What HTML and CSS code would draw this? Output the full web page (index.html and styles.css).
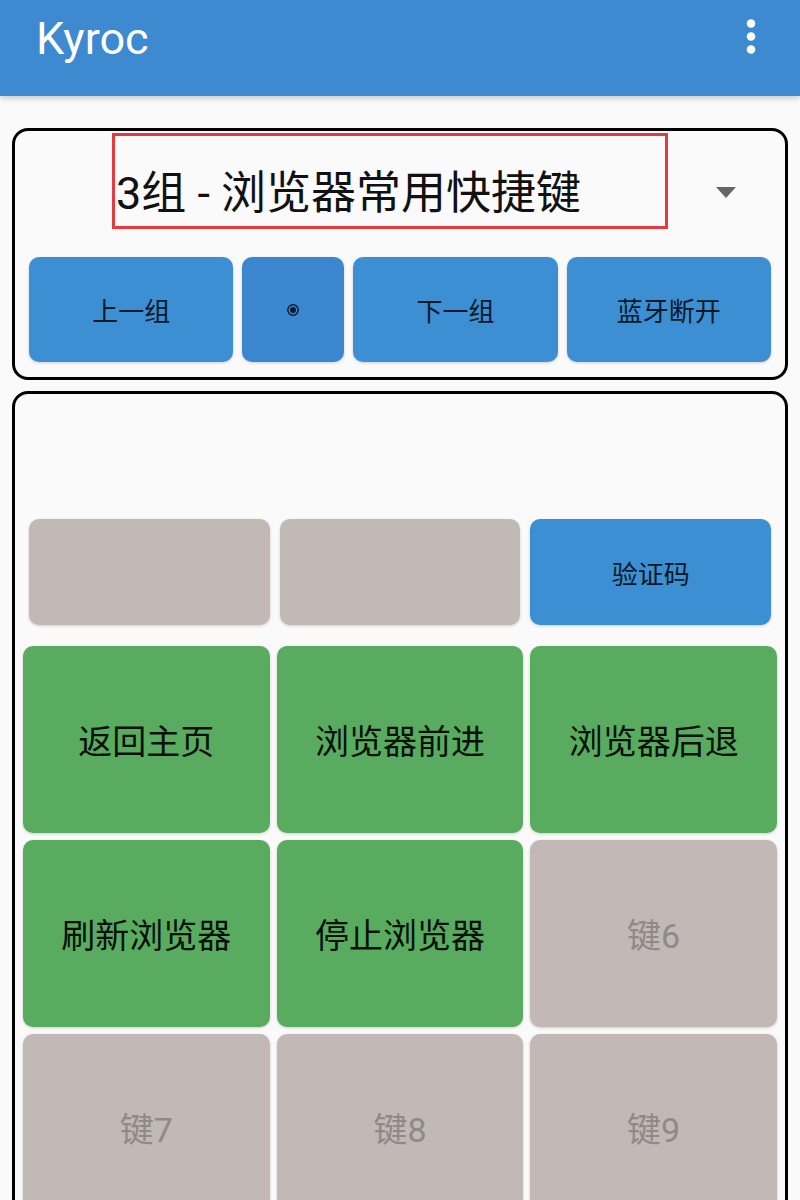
FILE: index.html
```html
<!DOCTYPE html>
<html lang="zh">
<head>
<meta charset="utf-8">
<title>Kyroc</title>
<link rel="stylesheet" href="styles.css">
</head>
<body>
<header class="appbar">
  <div class="title">Kyroc</div>
  <svg class="kebab" width="10" height="60" viewBox="0 0 10 60">
    <circle cx="5" cy="23.5" r="4.3" fill="#fff"/>
    <circle cx="5" cy="36.5" r="4.3" fill="#fff"/>
    <circle cx="5" cy="49.5" r="4.3" fill="#fff"/>
  </svg>
</header>

<main class="content">
  <section class="card card-top">
    <div class="select-row">
      <div class="select-box">3组 - 浏览器常用快捷键</div>
      <div class="caret"></div>
    </div>
    <div class="nav-row">
      <div class="btn blue wide">上一组</div>
      <div class="btn blue dark narrow">
        <svg width="14" height="14" viewBox="0 0 14 14">
          <circle cx="7" cy="7" r="5.2" fill="none" stroke="#0d1a2a" stroke-width="1.4"/>
          <circle cx="7" cy="7" r="3" fill="#0d1a2a"/>
        </svg>
      </div>
      <div class="btn blue wide">下一组</div>
      <div class="btn blue wide">蓝牙断开</div>
    </div>
  </section>

  <section class="card card-keys">
    <div class="top-row">
      <div class="btn grey"></div>
      <div class="btn grey"></div>
      <div class="btn blue">验证码</div>
    </div>
    <div class="key-grid">
      <div class="key green">返回主页</div>
      <div class="key green">浏览器前进</div>
      <div class="key green">浏览器后退</div>
      <div class="key green">刷新浏览器</div>
      <div class="key green">停止浏览器</div>
      <div class="key grey">键6</div>
      <div class="key grey">键7</div>
      <div class="key grey">键8</div>
      <div class="key grey">键9</div>
    </div>
  </section>
</main>
</body>
</html>
```

FILE: styles.css
```css
html, body {
  margin: 0;
  padding: 0;
  overflow: hidden;
  height: 1200px;
}
body {
  background: #fafafa;
  font-family: Roboto, "Noto Sans CJK SC", sans-serif;
}

.appbar {
  position: relative;
  z-index: 2;
  height: 96px;
  box-sizing: border-box;
  background: #3d8ad1;
  display: flex;
  align-items: flex-start;
  padding: 16px 44px 0 36px;
  box-shadow: 0 2px 6px rgba(0, 0, 0, 0.22);
}
.title {
  color: #fff;
  font-size: 45px;
  line-height: 45px;
  font-family: Roboto, sans-serif;
}
.kebab {
  margin-left: auto;
  margin-top: -16px;
}

.content {
  padding: 32px 12px 0 12px;
}

.card {
  border: 3px solid #000;
  border-radius: 16px;
  background: #fafafa;
}

.card-top {
  padding: 2px 14px 15px 14px;
}
.select-row {
  display: flex;
  align-items: flex-start;
  padding-left: 83px;
}
.select-box {
  width: 556px;
  height: 96px;
  box-sizing: border-box;
  border: 3px solid #e53a3f;
  padding: 35px 0 0 1px;
  font-size: 45px;
  line-height: 45px;
  color: #111;
  white-space: nowrap;
}
.caret {
  width: 0;
  height: 0;
  border-left: 10.5px solid transparent;
  border-right: 10.5px solid transparent;
  border-top: 11px solid #666;
  margin: 54px 0 0 48px;
}

.nav-row {
  display: flex;
  gap: 9px;
  margin-top: 28px;
}
.btn {
  height: 105px;
  border-radius: 10px;
  display: flex;
  align-items: center;
  justify-content: center;
  font-size: 26px;
  color: #0c1826;
  box-shadow: 0 1px 3px rgba(0, 0, 0, 0.18);
}
.wide { flex: 2; }
.narrow { flex: 1; }
.blue { background: #3c8fd2; }
.blue.dark { background: #3a86cf; }
.grey { background: #c2b8b6; }

.card-keys {
  margin-top: 11px;
  padding: 125px 8px 0 8px;
  height: 900px;
}
.top-row {
  display: grid;
  grid-template-columns: repeat(3, 1fr);
  gap: 10px;
  padding: 0 6px;
}
.top-row .btn {
  height: 106px;
  font-size: 26px;
}

.key-grid {
  margin-top: 21px;
  display: grid;
  grid-template-columns: repeat(3, 1fr);
  gap: 7px;
}
.key {
  height: 187px;
  border-radius: 10px;
  display: flex;
  align-items: center;
  justify-content: center;
  font-size: 34px;
  box-shadow: 0 1px 3px rgba(0, 0, 0, 0.18);
}
.key.green {
  background: #58ab5f;
  color: #081008;
}
.key.grey {
  background: #c2b8b6;
  color: #8f8988;
}
```
